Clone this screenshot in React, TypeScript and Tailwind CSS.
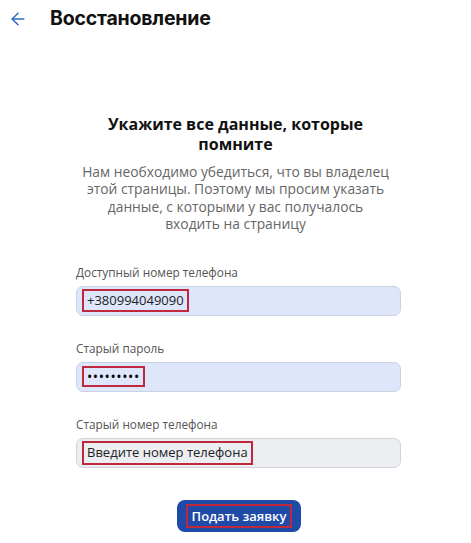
import { ArrowLeft } from "lucide-react";

function Field({
  label,
  value,
  tone,
  box,
  mono,
}: {
  label: string;
  value: string;
  tone: "blue" | "gray";
  box: string;
  mono?: boolean;
}) {
  return (
    <div className="flex flex-col">
      <div className="h-[16px] text-[11.8px] leading-[16px] text-[#555]">{label}</div>
      <div
        className={
          tone === "blue"
            ? "mt-[6px] flex h-[30px] items-center rounded-[7px] border border-[#c9d2e2] bg-[#dde6fb] pl-[5px]"
            : "mt-[6px] flex h-[30px] items-center rounded-[7px] border border-[#cfd3da] bg-[#eceef2] pl-[5px]"
        }
      >
        <span
          className={
            "flex items-center border-2 border-[#c0283c] px-[3px] " +
            box +
            (mono ? " text-[14px] tracking-[0.6px] text-black" : " text-[13px] text-[#222]")
          }
        >
          {value}
        </span>
      </div>
    </div>
  );
}

export default function App() {
  return (
    <div className="h-[543px] w-[471px] bg-white font-['Open_Sans',sans-serif]">
      <div className="flex h-[37px] items-center pt-[1px]">
        <ArrowLeft className="ml-[8px] h-[20px] w-[20px] text-[#2d6bc4]" strokeWidth={1.8} />
        <h1 className="ml-[22px] font-['Inter',sans-serif] text-[19.5px] font-bold tracking-[-0.2px] text-[#111]">
          Восстановление
        </h1>
      </div>

      <div className="mt-[77px] flex w-[471px] flex-col items-center">
        <h2 className="w-[300px] text-center text-[16px] font-bold leading-[20px] text-[#111]">
          Укажите все данные, которые помните
        </h2>
        <p className="mt-[9px] whitespace-nowrap text-center text-[13.8px] leading-[17.4px] text-[#666]">
          Нам необходимо убедиться, что вы владелец
          <br />
          этой страницы. Поэтому мы просим указать
          <br />
          данные, с которыми у вас получалось
          <br />
          входить на страницу
        </p>
      </div>

      <div className="ml-[76px] mt-[31px] flex w-[325px] flex-col gap-[24px]">
        <Field label="Доступный номер телефона" value="+380994049090" tone="blue" box="h-[23px]" />
        <Field label="Старый пароль" value="•••••••••" tone="blue" box="h-[21px]" mono />
        <Field label="Старый номер телефона" value="Введите номер телефона" tone="gray" box="h-[24px]" />
      </div>

      <div className="mt-[32px] flex justify-center pl-[7px]">
        <button className="flex h-[32px] w-[124px] items-center justify-center rounded-[8px] bg-[#1f4aa8]">
          <span className="border-2 border-[#c0283c] px-[4px] text-[13px] font-semibold leading-[20px] text-white">
            Подать заявку
          </span>
        </button>
      </div>
    </div>
  );
}
